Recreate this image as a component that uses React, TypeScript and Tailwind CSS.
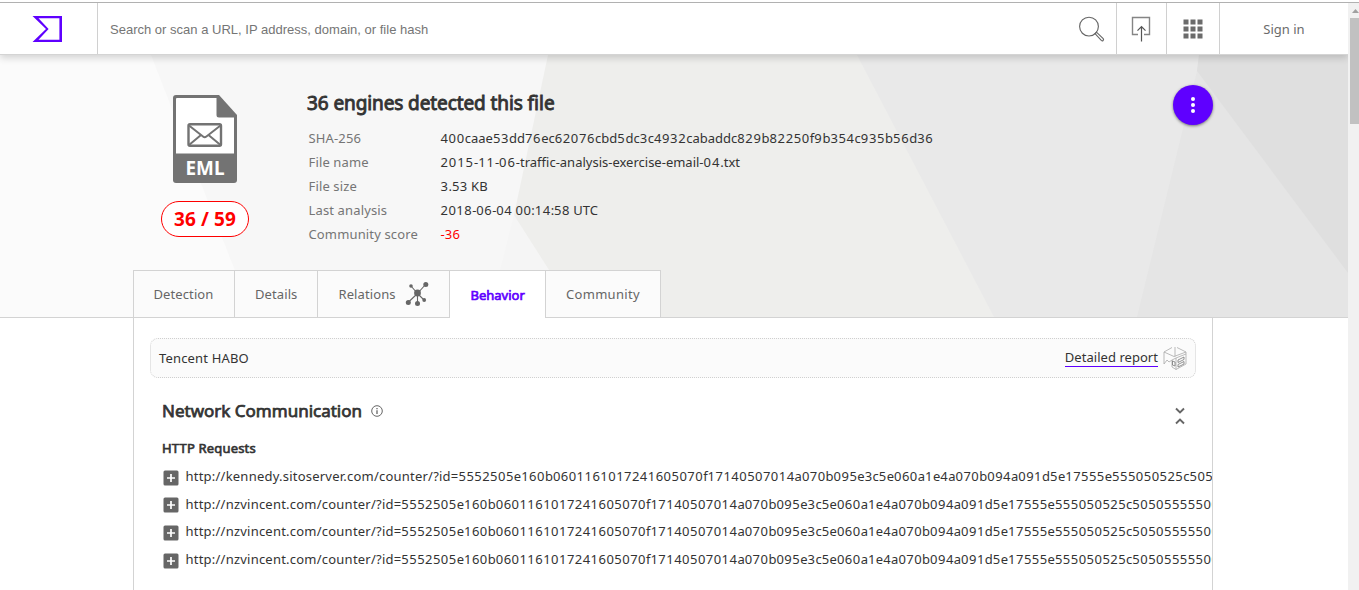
import React from "react";

const details = [
  ["SHA-256", "400caae53dd76ec62076cbd5dc3c4932cabaddc829b82250f9b354c935b56d36"],
  ["File name", "2015-11-06-traffic-analysis-exercise-email-04.txt"],
  ["File size", "3.53 KB"],
  ["Last analysis", "2018-06-04 00:14:58 UTC"],
  ["Community score", "-36"],
];

const pitches: Record<string, string> = {
  "SHA-256": "tracking-[0.63px]",
  "File name": "tracking-[0.93px]",
};

const query =
  "5552505e160b0601161017241605070f17140507014a070b095e3c5e060a1e4a070b094a091d5e17555e555050525c50505555500";
const requests = [
  "http://kennedy.sitoserver.com/counter/?id=",
  "http://nzvincent.com/counter/?id=",
  "http://nzvincent.com/counter/?id=",
  "http://nzvincent.com/counter/?id=",
];

// Sets runs of digits on a slightly wider pitch than the letters round them.
function Digits({ text, pitch = "tracking-[0.47px]" }: { text: string; pitch?: string }) {
  return (
    <>
      {text.split(/(\d+)/).map((part, i) =>
        i % 2 ? (
          <span key={i} className={pitch}>
            {part}
          </span>
        ) : (
          part
        )
      )}
    </>
  );
}

function Header() {
  return (
    <header className="relative z-10 flex h-[52px] border-b border-[#d4d4d4] bg-white shadow-[0_3px_7px_rgba(0,0,0,0.16)]">
      <div className="flex w-[98px] shrink-0 items-center border-r border-[#d0d0d0] pl-[32px]">
        <svg width="31" height="28" viewBox="0 0 31 28" className="mt-px">
          <path
            d="M0.5 1H30V27H0.5L14 13.9ZM6.5 3.3L16.6 13.9L6.5 24.7H27.4V3.3Z"
            fill="#5f00ff"
            fillRule="evenodd"
          />
        </svg>
      </div>
      <div className="flex flex-1 items-center justify-between pl-3 pr-[11px]">
        <span className="pt-[2px] font-['Liberation_Sans',sans-serif] text-[13px] tracking-[0.01px] text-[#757575]">
          Search or scan a URL, IP address, domain, or file hash
        </span>
        <svg width="27" height="27" viewBox="0 0 27 27" fill="none" stroke="#666" strokeWidth="1.15" className="mt-px">
          <circle cx="11" cy="10.6" r="9.4" />
          <path d="M17 17.6L18.5 16.2L25.2 22.7Q26 23.7 25.1 24.5Q24.3 25.3 23.3 24.4Z" />
        </svg>
      </div>
      <div className="flex w-[51px] items-center justify-center border-x border-[#d0d0d0]">
        <svg width="20" height="26" viewBox="0 0 20 26" fill="none" className="mr-px mt-px">
          <path d="M7 18.5H1.5V1.5H18.5V18.5H13" stroke="#858585" strokeWidth="1.4" />
          <path d="M10.5 25.5V11M6.5 14.7L10.5 10.7L14.5 14.7" stroke="#555" strokeWidth="1.2" />
        </svg>
      </div>
      <div className="flex w-[53px] items-center justify-center border-r border-[#d0d0d0]">
        <svg width="20" height="20" viewBox="0 0 20 20" fill="#6b6b6b">
          {[0.5, 7.5, 14.5].map((y) =>
            [0.5, 7.5, 14.5].map((x) => <rect key={x + "-" + y} x={x} y={y} width="5" height="5" />)
          )}
        </svg>
      </div>
      <div className="flex w-[128px] items-center justify-center pt-[2px] text-[13px] text-[#6b6b6b]">Sign in</div>
    </header>
  );
}

function Backdrop() {
  return (
    <svg className="absolute inset-0" width="1348" height="262" viewBox="0 55 1348 262">
      <rect y="55" width="1348" height="262" fill="#fbfbfb" />
      <path d="M151 55L253 317H1348V55Z" fill="#f7f7f7" />
      <path d="M514 215L488 317H600V270Z" fill="#f5f5f5" />
      <path d="M548 55L514 215L579 317H1348V55Z" fill="#eeeeec" />
      <path d="M857 55L994 317H1348V55Z" fill="#e9e9e9" />
      <path d="M1199 55L1197 71L1137 317H1348V55Z" fill="#e5e5e5" />
      <path d="M1199 55L1197 71L1348 273V55Z" fill="#dfdfdf" />
    </svg>
  );
}

function EmlIcon() {
  return (
    <svg width="64" height="88" viewBox="0 0 64 88">
      <path d="M3 0H46L64 20V85Q64 88 61 88H3Q0 88 0 85V3Q0 0 3 0Z" fill="#737373" />
      <path d="M3 4Q3 3 4 3H43.5V20Q43.5 22.5 46 22.5H61V58.5H3Z" fill="#fff" />
      <rect x="15.5" y="29.2" width="32.5" height="21.6" rx="1.5" fill="none" stroke="#737373" strokeWidth="2.4" />
      <path d="M16 30.5L30 41.5Q31.7 42.8 33.4 41.5L47.5 30.5M16 50L28 40M47.5 50L35.5 40" fill="none" stroke="#737373" strokeWidth="2" />
      <text x="32" y="80.2" textAnchor="middle" fill="#fff" fontSize="19.5" fontWeight="700" fontFamily="Noto Sans, sans-serif" textLength="39" lengthAdjust="spacingAndGlyphs">
        EML
      </text>
    </svg>
  );
}

function RelationsIcon() {
  return (
    <svg width="25" height="26" viewBox="0 0 25 26" fill="#666" stroke="#666" className="-mt-[2px]">
      <path d="M12.5 12.5L6 5M12.5 12.5L20.5 3.5M12.5 12.5L3 21.5M12.5 12.5V22M12.5 12.5L19 19" fill="none" strokeWidth="1.1" />
      <g stroke="none">
        <circle cx="12.5" cy="12" r="3.4" />
        <circle cx="6" cy="5" r="1.8" />
        <circle cx="20.8" cy="3.6" r="2.5" />
        <circle cx="3.3" cy="21.5" r="2.5" />
        <circle cx="12.5" cy="22.4" r="2.5" />
        <circle cx="19.2" cy="19" r="1.9" />
      </g>
    </svg>
  );
}

function Hero() {
  const tab = "flex items-center border-r border-[#d3d3d3] bg-[#fbfbfb] pt-px tracking-[0.1px]";
  return (
    <section className="relative flex h-[263px] flex-col justify-between border-b border-[#d3d3d3]">
      <Backdrop />
      <div className="relative flex pl-[161px]">
        <div className="flex w-[88px] flex-col items-center pt-10">
          <EmlIcon />
          <div className="mt-[18px] flex h-9 w-[88px] items-center justify-center rounded-full border border-[#f00] bg-white text-[19px] font-bold tracking-[0.1px] text-[#f00]">
            36 / 59
          </div>
        </div>
        <div className="flex-1 pl-[58px] pt-[34px]">
          <h1 className="text-[19px] leading-[28px] tracking-[-0.1px] text-[#333] [-webkit-text-stroke:0.9px_#333]">
            36 engines detected this <span className="tracking-normal">file</span>
          </h1>
          <div className="mt-[9px] pl-[1.5px] text-[13px] leading-6">
            {details.map(([name, value]) => (
              <div key={name} className="flex">
                <span className="w-[132px] tracking-[0.14px] text-[#757575]">{name}</span>
                <span className={value === "-36" ? "text-[#f00]" : "text-[#333]"}>
                  <Digits text={value} pitch={pitches[name]} />
                </span>
              </div>
            ))}
          </div>
        </div>
        <div className="mr-[135px] mt-[30px] flex size-10 flex-col items-center justify-center gap-[2px] rounded-full bg-[#5f00ff] shadow-[0_1px_3px_rgba(0,0,0,0.5)]">
          <i className="size-1 rounded-full bg-white" />
          <i className="size-1 rounded-full bg-white" />
          <i className="size-1 rounded-full bg-white" />
        </div>
      </div>
      <nav className="relative -mb-px ml-[133px] flex h-[48px] w-[528px] border-l border-t border-[#d3d3d3] text-[13px] text-[#666]">
        <div className={`${tab} w-[101px] border-b pl-[19.5px]`}>Detection</div>
        <div className={`${tab} w-[83px] border-b pl-5`}>Details</div>
        <div className={`${tab} w-[132px] gap-[9px] border-b pl-[20.5px]`}>
          Relations
          <RelationsIcon />
        </div>
        <div className="flex w-[96px] items-center border-r border-[#d3d3d3] bg-white pl-[20.5px] pt-[2px] text-[#5f00ff] [-webkit-text-stroke:0.7px_#5f00ff]">
          Behavior
        </div>
        <div className={`${tab} w-[115px] border-b pl-5 tracking-[0.3px]`}>Community</div>
      </nav>
    </section>
  );
}

function HaboIcon() {
  return (
    <svg width="24" height="25" viewBox="0 0 24 25" fill="none" stroke="#aaa" strokeWidth=".8">
      <path d="M1 6L9 1.5M14 1.5L23 6V18L13 23.5L9 21V14L6 16L4 14L1 18V6L11 10.5L23 6M12 1V10.5M9 14L13 12L23 8M13 12V23.5" />
      <path d="M15 14L21 11V13.5L15 16.5ZM15 18.5L21 15.5V18L15 21ZM9.5 15L12 16V20L9.5 19Z" stroke="#777" />
    </svg>
  );
}

function Report() {
  return (
    <main className="ml-[133px] h-[272px] w-[1080px] overflow-hidden border-x border-[#d3d3d3] bg-white pt-5 text-[#333]">
      <div className="ml-4 flex h-10 w-[1046px] items-center justify-between rounded-lg border border-dotted border-[#cfcfcf] bg-[#fbfbfb] pl-2 pr-2 text-[13px]">
        <span className="pt-[2px] tracking-[0.17px]">Tencent HABO</span>
        <div className="flex items-center gap-[5px]">
          <span className="border-b border-[#5f00ff] leading-[17px] tracking-[0.04px]">Detailed report</span>
          <HaboIcon />
        </div>
      </div>
      <div className="mt-[19px] flex h-7 items-center pl-7">
        <h2 className="text-[17px] leading-7 [-webkit-text-stroke:0.75px_#333]">Network Communication</h2>
        <svg width="12" height="12" viewBox="0 0 12 12" fill="none" stroke="#666" className="ml-[9px]">
          <circle cx="6" cy="6" r="5.3" strokeWidth="1" />
          <path d="M6 5.2V9M6 3V4.2" strokeWidth="1.3" />
        </svg>
        <svg width="10" height="18" viewBox="0 0 10 18" fill="none" stroke="#666" strokeWidth="1.9" className="ml-auto mr-[27px] mt-[10px]">
          <path d="M1 1.5L5 5.5L9 1.5M1 16.5L5 12.5L9 16.5" />
        </svg>
      </div>
      <h3 className="mt-[11px] pl-7 text-[13px] leading-6 tracking-[0.18px] [-webkit-text-stroke:0.65px_#333]">HTTP Requests</h3>
      <ul className="mt-[3px] pl-[29px] text-[13px]">
        {requests.map((url, i) => (
          <li key={i} className="flex h-[27.6px] items-center whitespace-nowrap">
            <svg width="16" height="16" viewBox="0 0 16 16" className="mr-[6.5px] mt-[2px] shrink-0">
              <rect x=".5" y=".5" width="15" height="15" rx="1.5" fill="#666" />
              <path d="M8 4V12M4 8H12" stroke="#fff" strokeWidth="1.7" />
            </svg>
            <span className="tracking-[0.225px]">{url}</span>
            <span>
              <Digits text={query} />
            </span>
          </li>
        ))}
      </ul>
    </main>
  );
}

export default function App() {
  return (
    <div className="h-[590px] w-[1359px] overflow-hidden bg-white font-['Noto_Sans',sans-serif]">
      <div className="h-[3px] border-b border-[#b1b1b1]" />
      <div className="flex h-[587px]">
        <div className="w-[1348px] overflow-hidden">
          <Header />
          <Hero />
          <Report />
        </div>
        <div className="flex w-[11px] flex-col bg-[#f1f1f1] pl-[2px]">
          <div className="flex h-[15px] items-center justify-end">
            <svg width="7" height="4" viewBox="0 0 7 4" fill="#a0a0a0">
              <path d="M0 4L3.5 0L7 4Z" />
            </svg>
          </div>
          <div className="h-[106px] bg-[#c1c1c1]" />
        </div>
      </div>
    </div>
  );
}
